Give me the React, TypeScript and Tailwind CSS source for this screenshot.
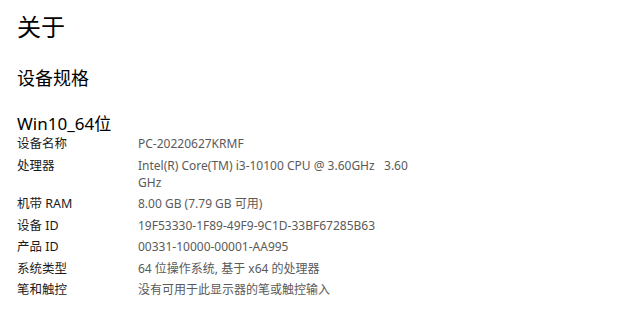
const font = { fontFamily: '"Segoe UI", "Noto Sans", "Noto Sans CJK SC", sans-serif' };

const specs: [string, string][] = [
  ["设备名称", "PC-20220627KRMF"],
  ["处理器", "Intel(R) Core(TM) i3-10100 CPU @ 3.60GHz\u00a0\u00a0 3.60 GHz"],
  ["机带 RAM", "8.00 GB (7.79 GB 可用)"],
  ["设备 ID", "19F53330-1F89-49F9-9C1D-33BF67285B63"],
  ["产品 ID", "00331-10000-00001-AA995"],
  ["系统类型", "64 位操作系统, 基于 x64 的处理器"],
  ["笔和触控", "没有可用于此显示器的笔或触控输入"],
];

export default function App() {
  return (
    <div className="w-[620px] h-[309px] bg-white overflow-hidden pl-[17px] pt-[9px] text-black" style={font}>
      <h1 className="text-[24px] leading-[36px]">关于</h1>
      <h2 className="mt-[20px] text-[18px] leading-[26px]">设备规格</h2>
      <div className="mt-[21px] text-[17px] leading-[23px]">Win10_64位</div>
      <div className="flex flex-col gap-[4.5px]">
        {specs.map(([k, v]) => (
          <div key={k} className="flex leading-[17px]">
            <div className="w-[121px] shrink-0 text-[12.5px] text-[#1a1a1a]">{k}</div>
            <div className="w-[275px] text-[12px] text-[#5a5a5a]">{v}</div>
          </div>
        ))}
      </div>
    </div>
  );
}
